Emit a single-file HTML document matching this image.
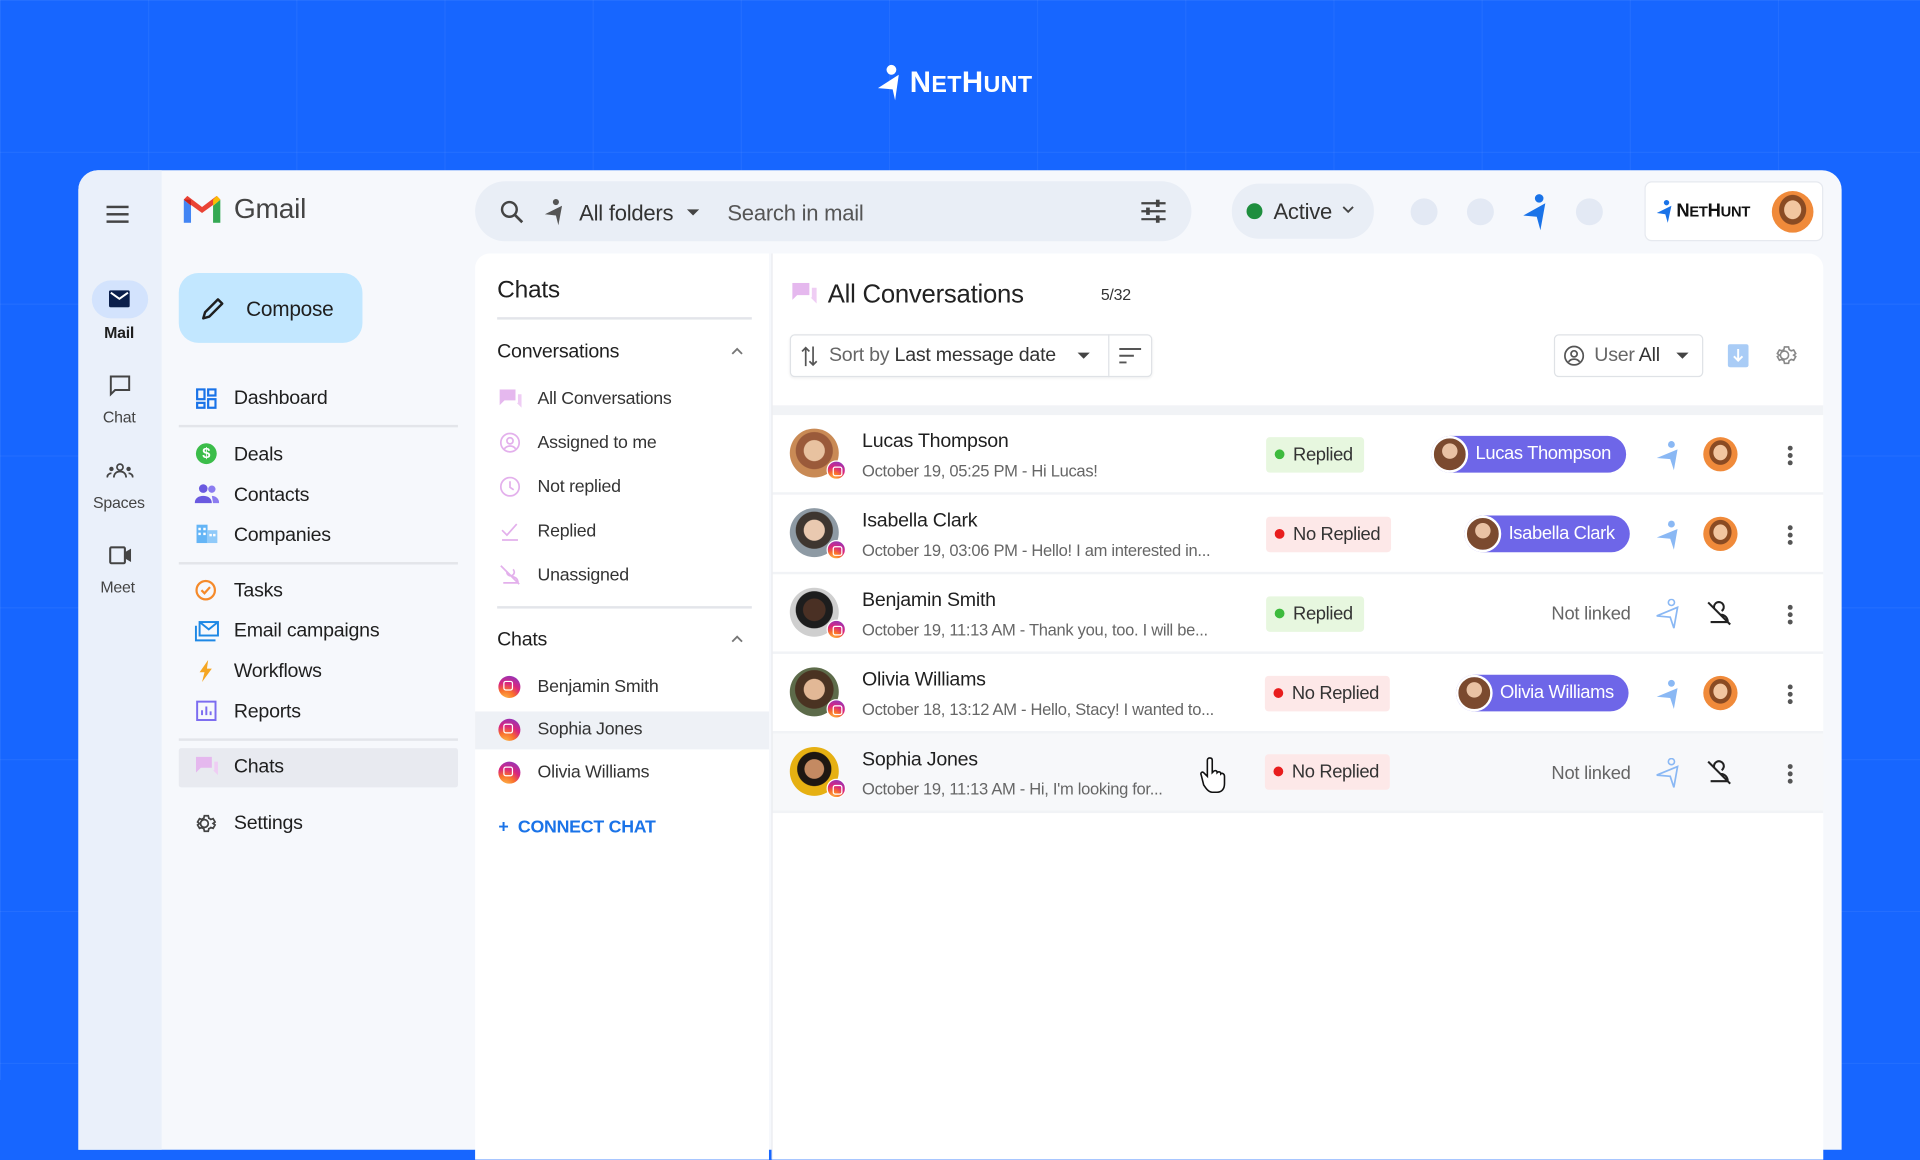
<!DOCTYPE html>
<html><head><meta charset="utf-8"><style>
*{box-sizing:border-box;margin:0;padding:0}
html,body{width:1920px;height:1080px;overflow:hidden;background:#1766ff;font-family:"Liberation Sans",Arial,sans-serif}
#w{position:absolute;left:0;top:0;width:1568px;height:882px;transform:scale(1.22449);transform-origin:0 0}
.a{position:absolute}
.grid{position:absolute;inset:0;background-image:linear-gradient(rgba(255,255,255,.06) 1px,transparent 1px),linear-gradient(90deg,rgba(255,255,255,.06) 1px,transparent 1px);background-size:121px 124px;background-position:0 0}
.t{position:absolute;white-space:nowrap;color:#1f1f1f;letter-spacing:-0.2px}
.nav{font-size:16px;color:#1f1f1f}
.sep{position:absolute;height:1.5px;background:#e3e5ea}
.row{position:absolute;left:631px;width:858px;height:63px;background:#fff}
.av{position:absolute;width:40px;height:40px;border-radius:50%}
.ig{position:absolute;width:16px;height:16px;border-radius:50%;background:radial-gradient(circle at 30% 110%,#fdc04b 0,#f9702c 35%,#d9257e 60%,#7a3bd0 100%);border:1.5px solid #fff}
.ig:after{content:"";position:absolute;left:3.5px;top:3.5px;width:6px;height:6px;border:1.3px solid #fff;border-radius:2px}
.badge{position:absolute;height:29px;border-radius:3px;font-size:15px;line-height:29px;padding-left:22px;padding-right:9px;color:#333;letter-spacing:-0.3px}
.badge:before{content:"";position:absolute;left:7px;top:10px;width:8px;height:8px;border-radius:50%}
.g{background:#e7f7df}.g:before{background:#3dbb3d}
.r{background:#fde8e8}.r:before{background:#e81d1d}
.pill{position:absolute;height:30px;border-radius:15px;background:#6e66e8;color:#fff;font-size:15px;line-height:30px;padding-left:36px;padding-right:12px;letter-spacing:-0.3px;white-space:nowrap}
.pill i{position:absolute;left:0;top:0;width:30px;height:30px;border-radius:50%;border:2px solid #fff;background:radial-gradient(circle at 50% 40%,#e9c2a4 0 30%,#7b4a2f 32%)}
.org{position:absolute;width:28px;height:28px;border-radius:50%;background:radial-gradient(ellipse at 50% 45%,#f2c6a0 0 28%,#8a4b23 30% 45%,#f08a3a 47%)}
.keb{position:absolute;width:4px;height:4px;border-radius:50%;background:#555;box-shadow:0 6px 0 #555,0 12px 0 #555}
.sub{font-size:13.5px;color:#666;letter-spacing:-0.25px}
</style></head><body><div id="w">
<div class="grid"></div>
<svg class="a" style="left:714px;top:52px" width="26" height="30" viewBox="0 0 26 30"><circle cx="14" cy="5" r="4" fill="#fff"/><path d="M20 9 L3 20 L15 21 L17 30 Z" fill="#fff"/></svg>
<div class="t" style="left:743px;top:54px;color:#fff;font-weight:bold;font-size:24px;letter-spacing:.3px">N<span style="font-size:19px">ET</span>H<span style="font-size:19px">UNT</span></div>

<div class="a" style="left:64px;top:139px;width:1440px;height:800px;background:#f6f8fc;border-radius:16px 16px 0 0"></div>
<div class="a" style="left:64px;top:139px;width:68px;height:800px;background:#eaf0fa;border-radius:16px 0 0 0"></div>
<div class="a" style="left:87px;top:168px;width:18px;height:2px;background:#444;box-shadow:0 6px 0 #444,0 12px 0 #444"></div>
<div class="a" style="left:75px;top:229px;width:46px;height:31px;border-radius:16px;background:#d3e3fd"></div>
<svg class="a" style="left:89px;top:237px" width="17" height="14"><rect x="0" y="0" width="17" height="14" rx="1.5" fill="#0b1f4b"/><path d="M1.5 2 L8.5 7 L15.5 2" stroke="#fff" stroke-width="1.6" fill="none"/></svg>
<div class="t" style="left:85px;top:264px;font-size:13px;font-weight:bold">Mail</div>
<svg class="a" style="left:89px;top:306px" width="18" height="18"><path d="M1.5 1.5h15v11H5l-3.5 3.5z" fill="none" stroke="#444" stroke-width="1.6"/></svg>
<div class="t" style="left:84px;top:333px;font-size:13px;color:#444">Chat</div>
<svg class="a" style="left:87px;top:378px" width="22" height="13"><circle cx="11" cy="3.5" r="2.5" fill="none" stroke="#444" stroke-width="1.4"/><circle cx="4" cy="5" r="1.8" fill="#444"/><circle cx="18" cy="5" r="1.8" fill="#444"/><path d="M6 12c0-3 2-5 5-5s5 2 5 5M0.5 12c0-2 1.5-3.5 3.5-3.5M21.5 12c0-2-1.5-3.5-3.5-3.5" stroke="#444" stroke-width="1.5" fill="none"/></svg>
<div class="t" style="left:76px;top:403px;font-size:13px;color:#444">Spaces</div>
<svg class="a" style="left:89px;top:446px" width="19" height="15"><rect x="1" y="1" width="12" height="13" rx="1" fill="none" stroke="#444" stroke-width="1.7"/><path d="M13 5l5-3v11l-5-3z" fill="#444"/></svg>
<div class="t" style="left:82px;top:472px;font-size:13px;color:#444">Meet</div>

<svg class="a" style="left:150px;top:160px" width="30" height="22" viewBox="0 0 30 22"><path d="M0 3v19h6V8z" fill="#4285f4"/><path d="M30 3v19h-6V8z" fill="#34a853"/><path d="M0 3l15 11L30 3 27 0 15 9 3 0z" fill="#ea4335"/><path d="M0 3l6 5V3z" fill="#c5221f"/><path d="M24 3v5l6-5L27 0z" fill="#fbbc04"/></svg>
<div class="t" style="left:191px;top:157px;font-size:23px;color:#444">Gmail</div>
<div class="a" style="left:146px;top:223px;width:150px;height:57px;border-radius:16px;background:#c2e7ff"></div>
<svg class="a" style="left:163px;top:241px" width="22" height="22"><path d="M3 19l1.5-5L15 3.5l3.5 3.5L8 17.5z" fill="none" stroke="#1f1f1f" stroke-width="2" stroke-linejoin="round"/></svg>
<div class="t" style="left:201px;top:243px;font-size:17px">Compose</div>

<svg class="a" style="left:160px;top:317px" width="17" height="17"><rect x="1" y="1" width="6" height="8" fill="none" stroke="#1a73e8" stroke-width="1.8"/><rect x="10" y="1" width="6" height="5" fill="none" stroke="#1a73e8" stroke-width="1.8"/><rect x="1" y="12" width="6" height="4" fill="none" stroke="#1a73e8" stroke-width="1.8"/><rect x="10" y="9" width="6" height="7" fill="none" stroke="#1a73e8" stroke-width="1.8"/></svg>
<div class="t nav" style="left:191px;top:317px">Dashboard</div>
<div class="sep" style="left:146px;top:347px;width:228px"></div>
<div class="a" style="left:160px;top:362px;width:17px;height:17px;border-radius:50%;background:#3bbd4a;color:#fff;font-size:12px;font-weight:bold;text-align:center;line-height:17px">$</div>
<div class="t nav" style="left:191px;top:363px">Deals</div>
<svg class="a" style="left:159px;top:395px" width="20" height="16"><circle cx="7" cy="4" r="3.5" fill="#6a5ae0"/><circle cx="14" cy="4.5" r="3" fill="#8b7cf0"/><path d="M0 16c0-4 3-6 7-6s7 2 7 6z" fill="#6a5ae0"/><path d="M14 10c3 0 6 2 6 6h-5z" fill="#8b7cf0"/></svg>
<div class="t nav" style="left:191px;top:396px">Contacts</div>
<svg class="a" style="left:160px;top:428px" width="18" height="16"><rect x="0.5" y="0.5" width="9" height="15" fill="#64b5f6"/><rect x="9" y="5" width="8.5" height="10.5" fill="#90caf9"/><g fill="#fff"><rect x="2" y="3" width="2" height="2"/><rect x="6" y="3" width="2" height="2"/><rect x="2" y="7" width="2" height="2"/><rect x="6" y="7" width="2" height="2"/><rect x="11" y="8" width="2" height="2"/><rect x="14" y="8" width="2" height="2"/></g></svg>
<div class="t nav" style="left:191px;top:429px">Companies</div>
<div class="sep" style="left:146px;top:459px;width:228px"></div>
<svg class="a" style="left:159px;top:473px" width="18" height="18"><circle cx="9" cy="9" r="7.5" fill="none" stroke="#f58a2a" stroke-width="1.8"/><path d="M5.5 9l2.5 2.5 4.5-5" fill="none" stroke="#f58a2a" stroke-width="1.8"/></svg>
<div class="t nav" style="left:191px;top:474px">Tasks</div>
<svg class="a" style="left:159px;top:507px" width="20" height="17"><path d="M1 4v12h16" fill="none" stroke="#1e88e5" stroke-width="1.6"/><rect x="4" y="1" width="15" height="11" fill="none" stroke="#1e88e5" stroke-width="1.6"/><path d="M4 1l7.5 6L19 1" fill="none" stroke="#1e88e5" stroke-width="1.6"/></svg>
<div class="t nav" style="left:191px;top:507px">Email campaigns</div>
<svg class="a" style="left:162px;top:539px" width="12" height="18"><path d="M8 0L1 10h4l-2 8 8-11H7z" fill="#f5a623"/></svg>
<div class="t nav" style="left:191px;top:540px">Workflows</div>
<svg class="a" style="left:160px;top:572px" width="17" height="17"><rect x="1" y="1" width="15" height="15" fill="none" stroke="#7b6cf0" stroke-width="1.6"/><path d="M5 12V8M8.5 12V5M12 12V9" stroke="#7b6cf0" stroke-width="1.6"/></svg>
<div class="t nav" style="left:191px;top:573px">Reports</div>
<div class="sep" style="left:146px;top:603px;width:228px"></div>
<div class="a" style="left:146px;top:611px;width:228px;height:32px;background:#e8eaf0;border-radius:2px"></div>
<svg class="a" style="left:160px;top:618px" width="18" height="17"><path d="M0 0h13v9H4L0 13z" fill="#e5b8ee"/><path d="M5 11h9l4 4V4h-3v7" fill="#efcdf4"/></svg>
<div class="t nav" style="left:191px;top:618px">Chats</div>
<svg class="a" style="left:159px;top:663px" width="19" height="19" viewBox="0 0 24 24"><path d="M12 8a4 4 0 100 8 4 4 0 000-8zm9 4l2-1.5-2-3.5-2.4.8a8 8 0 00-2-1.2L16 4h-4l-.6 2.6a8 8 0 00-2 1.2L7 7 5 10.5 7 12l-2 1.5L7 17l2.4-.8a8 8 0 002 1.2L12 20h4l.6-2.6a8 8 0 002-1.2L21 17l2-3.5z" fill="none" stroke="#444" stroke-width="1.8" transform="translate(-2 0)"/></svg>
<div class="t nav" style="left:191px;top:664px">Settings</div>

<div class="a" style="left:388px;top:148px;width:585px;height:49px;border-radius:25px;background:#e9eef6"></div>
<svg class="a" style="left:408px;top:163px" width="20" height="20"><circle cx="8" cy="8" r="6" fill="none" stroke="#444" stroke-width="2"/><path d="M12.5 12.5l6 6" stroke="#444" stroke-width="2.2"/></svg>
<svg class="a" style="left:444px;top:162px" width="16" height="22"><circle cx="10" cy="3" r="2.5" fill="#555"/><path d="M15 6L1 13l9 1 2 8z" fill="#555"/></svg>
<div class="t" style="left:473px;top:164px;font-size:18px;color:#333">All folders</div>
<div class="a" style="left:561px;top:171px;border:5px solid transparent;border-top:5px solid #444"></div>
<div class="t" style="left:594px;top:164px;font-size:18px;color:#555">Search in mail</div>
<svg class="a" style="left:932px;top:163px" width="20" height="19"><path d="M0 3h20M0 9.5h20M0 16h20" stroke="#444" stroke-width="1.8"/><rect x="12" y="0" width="3" height="6" fill="#444"/><rect x="4" y="6.5" width="3" height="6" fill="#444"/><rect x="12" y="13" width="3" height="6" fill="#444"/></svg>
<div class="a" style="left:1006px;top:150px;width:116px;height:45px;border-radius:22px;background:#e9eef6"></div>
<div class="a" style="left:1018px;top:166px;width:13px;height:13px;border-radius:50%;background:#1e8e3e"></div>
<div class="t" style="left:1040px;top:163px;font-size:18px;color:#333">Active</div>
<svg class="a" style="left:1096px;top:168px" width="10" height="7"><path d="M1 1l4 4 4-4" stroke="#444" stroke-width="1.5" fill="none"/></svg>
<div class="a" style="left:1152px;top:162px;width:22px;height:22px;border-radius:50%;background:#e3e9f4"></div>
<div class="a" style="left:1198px;top:162px;width:22px;height:22px;border-radius:50%;background:#e3e9f4"></div>
<svg class="a" style="left:1242px;top:158px" width="22" height="30"><circle cx="15" cy="4" r="3.5" fill="#1a73e8"/><path d="M20 8L2 18l11 1 3 11z" fill="#1a73e8"/></svg>
<div class="a" style="left:1287px;top:162px;width:22px;height:22px;border-radius:50%;background:#e3e9f4"></div>
<div class="a" style="left:1343px;top:148px;width:146px;height:49px;border-radius:6px;background:#fff;border:1px solid #e6e9ef"></div>
<svg class="a" style="left:1352px;top:163px" width="14" height="19"><circle cx="9" cy="2.5" r="2.2" fill="#1a73e8"/><path d="M13 5L1 11l7 1 2 7z" fill="#1a73e8"/></svg>
<div class="t" style="left:1369px;top:164px;font-size:15px;font-weight:bold;color:#111">N<span style="font-size:12px">ET</span>H<span style="font-size:12px">UNT</span></div>
<div class="a" style="left:1447px;top:156px;width:34px;height:34px;border-radius:50%;background:radial-gradient(ellipse at 50% 45%,#f2c6a0 0 28%,#8a4b23 30% 45%,#f08a3a 47%)"></div>

<div class="a" style="left:388px;top:207px;width:240px;height:740px;background:#fff;border-radius:12px 0 0 0"></div>
<div class="t" style="left:406px;top:226px;font-size:20px">Chats</div>
<div class="sep" style="left:406px;top:259px;width:208px"></div>
<div class="t" style="left:406px;top:279px;font-size:16px">Conversations</div>
<svg class="a" style="left:597px;top:283px" width="10" height="7"><path d="M1 6l4-4 4 4" stroke="#777" stroke-width="1.5" fill="none"/></svg>
<svg class="a" style="left:408px;top:318px" width="18" height="17"><path d="M0 0h13v9H4L0 13z" fill="#e5b8ee"/><path d="M5 11h9l4 4V4h-3v7" fill="#efcdf4"/></svg>
<div class="t" style="left:439px;top:318px;font-size:14.5px;color:#333">All Conversations</div>
<svg class="a" style="left:408px;top:353px" width="17" height="17"><circle cx="8.5" cy="8.5" r="7.5" fill="none" stroke="#e3b0ec" stroke-width="1.4"/><circle cx="8.5" cy="7" r="2.5" fill="none" stroke="#e3b0ec" stroke-width="1.4"/><path d="M4 13.5c2-3 7-3 9 0" stroke="#e3b0ec" stroke-width="1.4" fill="none"/></svg>
<div class="t" style="left:439px;top:354px;font-size:14.5px;color:#333">Assigned to me</div>
<svg class="a" style="left:408px;top:389px" width="17" height="17"><circle cx="8.5" cy="8.5" r="7.5" fill="none" stroke="#e3b0ec" stroke-width="1.4"/><path d="M8.5 4v5l3 2" stroke="#e3b0ec" stroke-width="1.4" fill="none"/></svg>
<div class="t" style="left:439px;top:390px;font-size:14.5px;color:#333">Not replied</div>
<svg class="a" style="left:408px;top:425px" width="17" height="17"><path d="M2 8l4 4 8-9M2 16h13" stroke="#e3b0ec" stroke-width="1.4" fill="none"/></svg>
<div class="t" style="left:439px;top:426px;font-size:14.5px;color:#333">Replied</div>
<svg class="a" style="left:408px;top:461px" width="17" height="17"><path d="M1 1l15 15M3 15h12c0-3-2-5-5-5M6 6a3 3 0 105-2" stroke="#e3b0ec" stroke-width="1.4" fill="none"/></svg>
<div class="t" style="left:439px;top:462px;font-size:14.5px;color:#333">Unassigned</div>
<div class="sep" style="left:406px;top:495px;width:208px"></div>
<div class="t" style="left:406px;top:514px;font-size:16px">Chats</div>
<svg class="a" style="left:597px;top:518px" width="10" height="7"><path d="M1 6l4-4 4 4" stroke="#777" stroke-width="1.5" fill="none"/></svg>
<div class="ig" style="left:407px;top:552px;width:18px;height:18px;border:none"></div>
<div class="t" style="left:439px;top:553px;font-size:14.5px;color:#333">Benjamin Smith</div>
<div class="a" style="left:388px;top:581px;width:240px;height:31px;background:#eef1f6"></div>
<div class="ig" style="left:407px;top:587px;width:18px;height:18px;border:none"></div>
<div class="t" style="left:439px;top:588px;font-size:14.5px;color:#333">Sophia Jones</div>
<div class="ig" style="left:407px;top:622px;width:18px;height:18px;border:none"></div>
<div class="t" style="left:439px;top:623px;font-size:14.5px;color:#333">Olivia Williams</div>
<div class="t" style="left:407px;top:668px;font-size:14.5px;font-weight:bold;color:#1a73e8">+&nbsp; CONNECT CHAT</div>

<div class="a" style="left:630px;top:207px;width:859px;height:740px;background:#fff;border-left:1.5px solid #e6e8ec;border-radius:0 12px 0 0"></div>
<svg class="a" style="left:647px;top:231px" width="20" height="19"><path d="M0 0h14v10H4L0 14z" fill="#e5b8ee"/><path d="M6 12h9l5 5V4h-4v8" fill="#efcdf4"/></svg>
<div class="t" style="left:676px;top:229px;font-size:21px;color:#222">All Conversations</div>
<div class="t" style="left:899px;top:233px;font-size:13px;color:#333">5/32</div>
<div class="a" style="left:645px;top:273px;width:296px;height:35px;border:1px solid #dfe2e6;border-radius:4px;box-shadow:0 1px 2px rgba(0,0,0,.06)"></div>
<div class="a" style="left:905px;top:273px;width:1px;height:35px;background:#dfe2e6"></div>
<svg class="a" style="left:654px;top:282px" width="14" height="18"><path d="M4 17V2M1 5l3-3 3 3M10 1v15M7 13l3 3 3-3" stroke="#555" stroke-width="1.4" fill="none"/></svg>
<div class="t" style="left:677px;top:282px;font-size:16px;color:#666">Sort by <span style="color:#333">Last message date</span></div>
<div class="a" style="left:880px;top:288px;border:5px solid transparent;border-top:5px solid #444"></div>
<svg class="a" style="left:914px;top:284px" width="18" height="13"><path d="M0 1h18M0 6.5h12M0 12h6" stroke="#555" stroke-width="1.6"/></svg>
<div class="a" style="left:1269px;top:273px;width:122px;height:35px;border:1px solid #dfe2e6;border-radius:4px"></div>
<svg class="a" style="left:1277px;top:282px" width="17" height="17"><circle cx="8.5" cy="8.5" r="7.5" fill="none" stroke="#555" stroke-width="1.4"/><circle cx="8.5" cy="7" r="2.5" fill="none" stroke="#555" stroke-width="1.4"/><path d="M4 13.5c2-3 7-3 9 0" stroke="#555" stroke-width="1.4" fill="none"/></svg>
<div class="t" style="left:1302px;top:282px;font-size:16px;color:#666">User <span style="color:#333">All</span></div>
<div class="a" style="left:1369px;top:288px;border:5px solid transparent;border-top:5px solid #444"></div>
<svg class="a" style="left:1411px;top:281px" width="17" height="19"><rect x="0" y="0" width="17" height="19" rx="2" fill="#a9ccf6"/><path d="M8.5 4v9M5 10l3.5 3.5L12 10" stroke="#fff" stroke-width="1.6" fill="none"/></svg>
<svg class="a" style="left:1449px;top:280px" width="20" height="20" viewBox="0 0 24 24"><path d="M12 8a4 4 0 100 8 4 4 0 000-8zm9 4l2-1.5-2-3.5-2.4.8a8 8 0 00-2-1.2L16 4h-4l-.6 2.6a8 8 0 00-2 1.2L7 7 5 10.5 7 12l-2 1.5L7 17l2.4-.8a8 8 0 002 1.2L12 20h4l.6-2.6a8 8 0 002-1.2L21 17l2-3.5z" fill="none" stroke="#888" stroke-width="1.6" transform="translate(-2 0)"/></svg>
<div class="a" style="left:631px;top:331px;width:858px;height:333px;background:#f1f3f6"></div>

<div class="row" style="top:339px"></div>
<div class="row" style="top:404px"></div>
<div class="row" style="top:469px"></div>
<div class="row" style="top:534px"></div>
<div class="row" style="top:599px;background:#f7f8fa"></div>

<div class="av" style="left:645px;top:350px;background:radial-gradient(circle at 50% 45%,#e8c2a0 0 28%,#9a5a3a 30% 50%,#c98a55 52%)"></div><div class="ig" style="left:675px;top:376px"></div>
<div class="t" style="left:704px;top:352px;font-size:16px">Lucas Thompson</div>
<div class="t sub" style="left:704px;top:377px">October 19, 05:25 PM - Hi Lucas!</div>
<div class="badge g" style="left:1034px;top:357px">Replied</div>
<div class="pill" style="left:1169px;top:356px">Lucas Thompson<i></i></div>
<svg class="a" style="left:1352px;top:360px" width="20" height="24"><circle cx="13" cy="3" r="2.8" fill="#8ab8f4"/><path d="M18 7L1 14l11 1 3 9z" fill="#8ab8f4"/></svg>
<div class="org" style="left:1391px;top:357px"></div>
<div class="keb" style="left:1460px;top:364px"></div>

<div class="av" style="left:645px;top:415px;background:radial-gradient(circle at 50% 45%,#e9c9b0 0 28%,#3e3630 30% 50%,#8e9aa4 52%)"></div><div class="ig" style="left:675px;top:441px"></div>
<div class="t" style="left:704px;top:417px;font-size:16px">Isabella Clark</div>
<div class="t sub" style="left:704px;top:442px">October 19, 03:06 PM - Hello! I am interested in...</div>
<div class="badge r" style="left:1034px;top:422px">No Replied</div>
<div class="pill" style="left:1196px;top:421px">Isabella Clark<i></i></div>
<svg class="a" style="left:1352px;top:425px" width="20" height="24"><circle cx="13" cy="3" r="2.8" fill="#8ab8f4"/><path d="M18 7L1 14l11 1 3 9z" fill="#8ab8f4"/></svg>
<div class="org" style="left:1391px;top:422px"></div>
<div class="keb" style="left:1460px;top:429px"></div>

<div class="av" style="left:645px;top:480px;background:radial-gradient(circle at 50% 45%,#4a3024 0 30%,#1d1d1d 32% 50%,#cfcfcf 52%)"></div><div class="ig" style="left:675px;top:506px"></div>
<div class="t" style="left:704px;top:482px;font-size:16px">Benjamin Smith</div>
<div class="t sub" style="left:704px;top:507px">October 19, 11:13 AM - Thank you, too. I will be...</div>
<div class="badge g" style="left:1034px;top:487px">Replied</div>
<div class="t" style="left:1267px;top:493px;font-size:15px;color:#666">Not linked</div>
<svg class="a" style="left:1352px;top:489px" width="20" height="25"><circle cx="13" cy="3" r="2.5" fill="none" stroke="#8ab8f4" stroke-width="1.3"/><path d="M18 7L1 14l11 1 3 9z" fill="none" stroke="#8ab8f4" stroke-width="1.4"/></svg>
<svg class="a" style="left:1393px;top:490px" width="22" height="22"><path d="M2 2l18 18M4 18h14c0-3-2-6-6-6M7 7a4 4 0 116 2" stroke="#222" stroke-width="1.7" fill="none"/></svg>
<div class="keb" style="left:1460px;top:494px"></div>

<div class="av" style="left:645px;top:545px;background:radial-gradient(circle at 50% 45%,#e2b896 0 28%,#4a3322 30% 52%,#5d6b4a 54%)"></div><div class="ig" style="left:675px;top:571px"></div>
<div class="t" style="left:704px;top:547px;font-size:16px">Olivia Williams</div>
<div class="t sub" style="left:704px;top:572px">October 18, 13:12 AM - Hello, Stacy! I wanted to...</div>
<div class="badge r" style="left:1033px;top:552px">No Replied</div>
<div class="pill" style="left:1189px;top:551px">Olivia Williams<i></i></div>
<svg class="a" style="left:1352px;top:555px" width="20" height="24"><circle cx="13" cy="3" r="2.8" fill="#8ab8f4"/><path d="M18 7L1 14l11 1 3 9z" fill="#8ab8f4"/></svg>
<div class="org" style="left:1391px;top:552px"></div>
<div class="keb" style="left:1460px;top:559px"></div>

<div class="av" style="left:645px;top:610px;background:radial-gradient(circle at 50% 45%,#c48a62 0 26%,#1e1712 28% 46%,#e6b012 48%)"></div><div class="ig" style="left:675px;top:636px"></div>
<div class="t" style="left:704px;top:612px;font-size:16px">Sophia Jones</div>
<div class="t sub" style="left:704px;top:637px">October 19, 11:13 AM - Hi, I'm looking for...</div>
<div class="badge r" style="left:1033px;top:616px">No Replied</div>
<div class="t" style="left:1267px;top:623px;font-size:15px;color:#666">Not linked</div>
<svg class="a" style="left:1352px;top:619px" width="20" height="25"><circle cx="13" cy="3" r="2.5" fill="none" stroke="#8ab8f4" stroke-width="1.3"/><path d="M18 7L1 14l11 1 3 9z" fill="none" stroke="#8ab8f4" stroke-width="1.4"/></svg>
<svg class="a" style="left:1393px;top:620px" width="22" height="22"><path d="M2 2l18 18M4 18h14c0-3-2-6-6-6M7 7a4 4 0 116 2" stroke="#222" stroke-width="1.7" fill="none"/></svg>
<div class="keb" style="left:1460px;top:624px"></div>
<svg class="a" style="left:980px;top:617px" width="26" height="32"><path d="M8 2c1.5 0 2 1 2 2v10l1-1c1-1 3-1 3 1 1-1 3-1 3 1 1-1 3 0 3 2v6c0 4-2 7-6 7h-4c-3 0-5-3-7-6L1 16c-1-2 1-3 2-2l3 3V4c0-1 .5-2 2-2z" fill="#fff" stroke="#111" stroke-width="1.3"/></svg>
</div></body></html>
